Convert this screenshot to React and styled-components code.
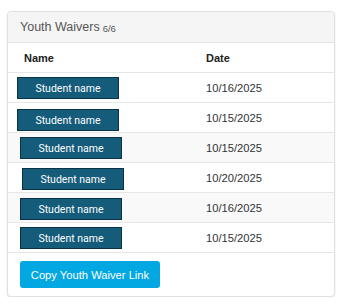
import React from "react";
import styled, { createGlobalStyle } from "styled-components";

const GlobalStyle = createGlobalStyle`
  body {
    margin: 0;
    background: #fff;
    font-family: "Liberation Sans", Arial, sans-serif;
  }
`;

const Panel = styled.div`
  margin: 11px 0 0 7px;
  width: 326px;
  border: 1px solid #e1e1e1;
  border-radius: 4px;
  box-shadow: 0 1px 2px rgba(0, 0, 0, 0.12);
  background: #fff;
  overflow: hidden;
`;

const PanelHeader = styled.div`
  height: 30px;
  display: flex;
  align-items: center;
  gap: 3px;
  padding-left: 12px;
  background: #f5f5f5;
  border-bottom: 1px solid #e3e3e3;
  color: #555;
`;

const Title = styled.span`
  font-size: 12.5px;
`;

const Count = styled.span`
  font-size: 9.5px;
  margin-top: 2px;
`;

const Row = styled.div`
  display: grid;
  grid-template-columns: 198px 1fr;
  height: 29px;
  border-bottom: 1px solid #e6e6e6;
  background: ${p => (p.shaded ? "#f9f9f9" : "#fff")};
`;

const HeadCell = styled.div`
  display: flex;
  align-items: center;
  padding-left: ${p => p.pad || 0}px;
  font-size: 11px;
  font-weight: bold;
  color: #222;
`;

const NameCell = styled.div`
  display: flex;
  align-items: flex-start;
  padding: 4px 0 0 9px;
`;

const DateCell = styled.div`
  display: flex;
  align-items: center;
  font-size: 11.2px;
  color: #333;
`;

const NameButton = styled.button`
  width: 102px;
  height: 22px;
  margin-left: ${p => p.shift}px;
  margin-top: ${p => p.drop}px;
  padding: 0;
  background: #155b7a;
  border: 1px solid #0b3346;
  color: #fff;
  font-family: Roboto, "Liberation Sans", sans-serif;
  font-size: 10.5px;
  cursor: pointer;
`;

const Footer = styled.div`
  padding: 8px 12px 8px;
`;

const CopyButton = styled.button`
  width: 140px;
  height: 27px;
  padding: 0;
  border: none;
  border-radius: 3px;
  background: #03a7e2;
  color: #fff;
  font-family: "Liberation Sans", Arial, sans-serif;
  font-size: 11.2px;
  cursor: pointer;
`;

const waivers = [
  { date: "10/16/2025", shift: 0, drop: 0 },
  { date: "10/15/2025", shift: 0, drop: 2 },
  { date: "10/15/2025", shift: 3, drop: 0, shaded: true },
  { date: "10/20/2025", shift: 5, drop: 1 },
  { date: "10/16/2025", shift: 3, drop: 1, shaded: true },
  { date: "10/15/2025", shift: 3, drop: 0 }
];

export default function App() {
  return (
    <>
      <GlobalStyle />
      <Panel>
        <PanelHeader>
          <Title>Youth Waivers</Title>
          <Count>6/6</Count>
        </PanelHeader>
        <Row>
          <HeadCell pad={16}>Name</HeadCell>
          <HeadCell>Date</HeadCell>
        </Row>
        {waivers.map((w, i) => (
          <Row key={i} shaded={w.shaded}>
            <NameCell>
              <NameButton shift={w.shift} drop={w.drop}>Student name</NameButton>
            </NameCell>
            <DateCell>{w.date}</DateCell>
          </Row>
        ))}
        <Footer>
          <CopyButton>Copy Youth Waiver Link</CopyButton>
        </Footer>
      </Panel>
    </>
  );
}
